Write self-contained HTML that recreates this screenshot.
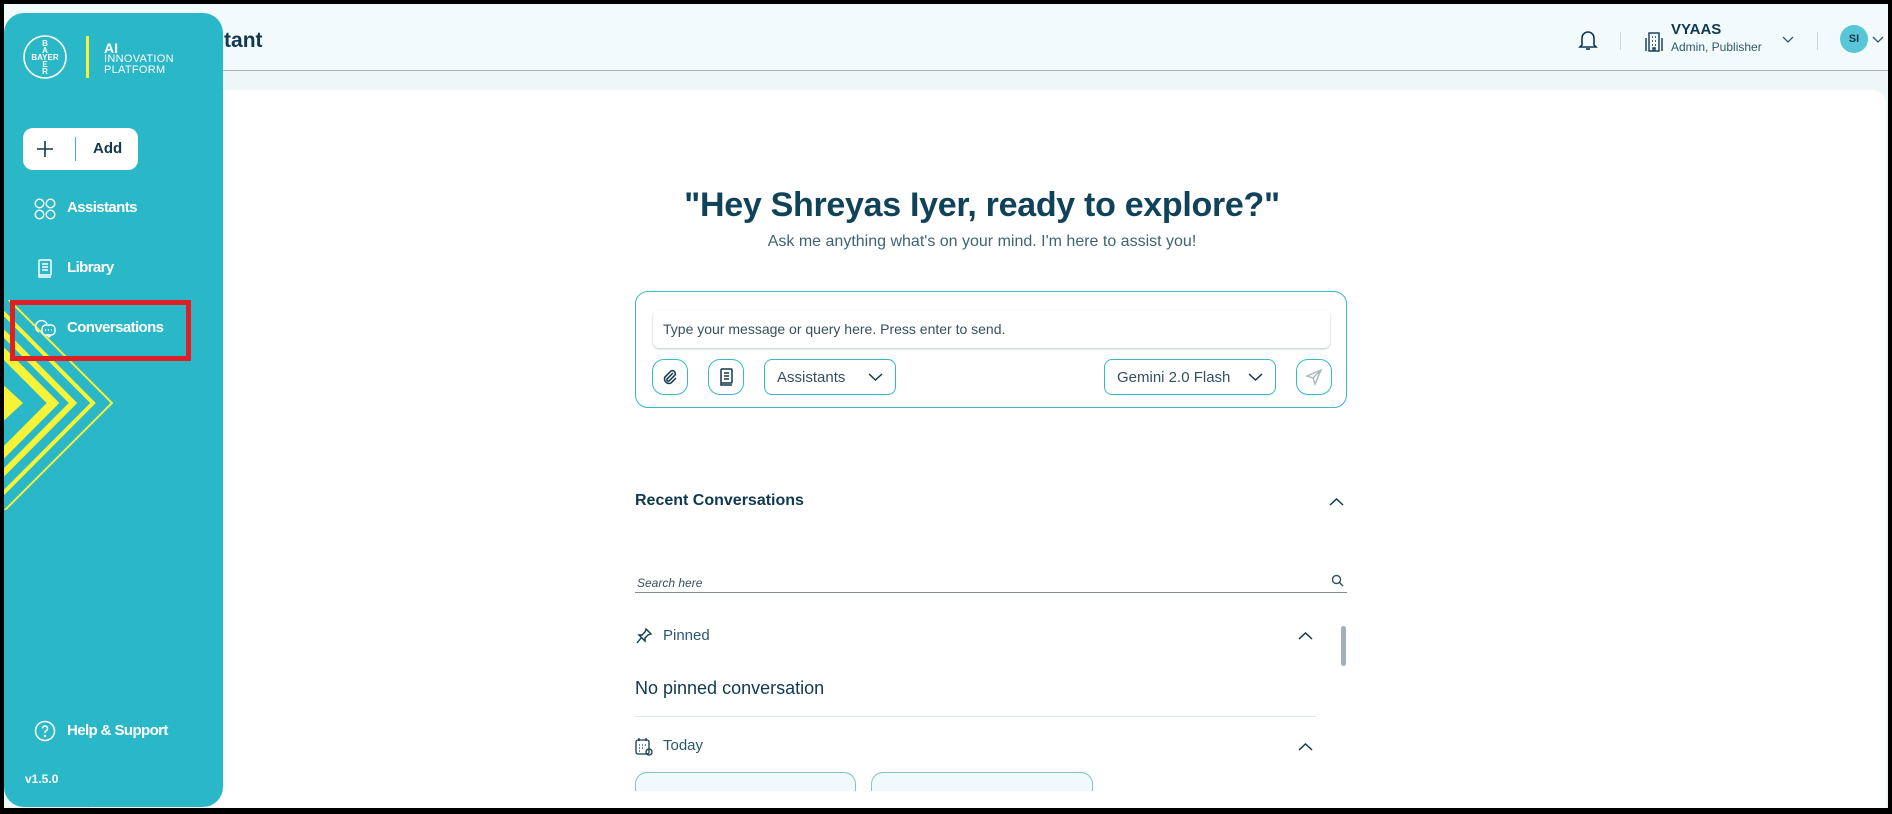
<!DOCTYPE html>
<html><head><meta charset="utf-8"><style>
*{margin:0;padding:0;box-sizing:border-box}
body{width:1892px;height:814px;background:#000;font-family:"Liberation Sans",sans-serif;position:relative;overflow:hidden;color:#10384f}
.frame{position:absolute;left:4px;top:4px;width:1884px;height:804px;background:#eef6f7;overflow:hidden}
.header{position:absolute;left:0;top:0;width:1884px;height:67px;background:#f3fafb;border-bottom:1px solid #a9b3b6}
.card{position:absolute;left:86px;top:86px;width:1796px;height:730px;background:#fff;border-radius:0 14px 0 0}
.side{position:absolute;left:4px;top:13px;width:219px;height:794px;background:#2ab7c8;border-radius:20px;overflow:hidden}
.abs{position:absolute}
.nav{position:absolute;left:0;color:#fff;font-weight:bold;font-size:15px;letter-spacing:-0.6px}
.btn{position:absolute;border:1px solid #39b8c8;border-radius:8px;background:#fff}
.t{position:absolute;white-space:nowrap}
</style></head><body>
<div class="frame">
 <div class="header">
  <div class="t" style="left:164px;top:25px;font-size:21px;font-weight:bold;color:#10384f">Assistant</div>
  <svg class="abs" style="left:1574px;top:24px" width="20" height="24" viewBox="0 0 20 24" fill="none" stroke="#10384f" stroke-width="1.6"><path d="M4 17V10a6 6 0 0 1 12 0v7l2 2H2z"/><path d="M8 21h4"/></svg>
  <div class="abs" style="left:1616px;top:28px;width:1px;height:18px;background:#cfd8da"></div>
  <svg class="abs" style="left:1640px;top:26px" width="22" height="24" viewBox="0 0 22 24" fill="none" stroke="#10384f" stroke-width="1.4"><rect x="5" y="3" width="10" height="18"/><path d="M2 8v13M18 8v13M8 7h1M11 7h1M8 11h1M11 11h1M8 15h1M11 15h1M9 21v-3h2v3"/></svg>
  <div class="t" style="left:1667px;top:17px;font-size:15px;font-weight:bold">VYAAS</div>
  <div class="t" style="left:1667px;top:36px;font-size:12px;color:#2b5a6e">Admin, Publisher</div>
  <svg class="abs" style="left:1778px;top:32px" width="12" height="8"><path d="M1 1l5 5 5-5" stroke="#2b5a6e" fill="none" stroke-width="1.3"/></svg>
  <div class="abs" style="left:1813px;top:28px;width:1px;height:18px;background:#cfd8da"></div>
  <div class="abs" style="left:1836px;top:21px;width:28px;height:28px;border-radius:50%;background:#58c6d6;font-size:11px;font-weight:bold;text-align:center;line-height:28px">SI</div>
  <svg class="abs" style="left:1868px;top:32px" width="12" height="8"><path d="M1 1l5 5 5-5" stroke="#2b5a6e" fill="none" stroke-width="1.3"/></svg>
 </div>
 <div class="card"></div>
</div>
<div class="t" style="left:0;width:1964px;text-align:center;top:186px;font-size:34px;font-weight:bold;color:#10435a;letter-spacing:-0.3px">"Hey Shreyas Iyer, ready to explore?"</div>
<div class="t" style="left:0;width:1964px;text-align:center;top:233px;font-size:16px;color:#3d6474">Ask me anything what's on your mind. I'm here to assist you!</div>
<div class="abs" style="left:635px;top:291px;width:712px;height:117px;border:1px solid #39b8c8;border-radius:13px;background:#fff"></div>
<div class="abs" style="left:653px;top:310px;width:677px;height:38px;border-radius:6px;background:#fff;box-shadow:0 1px 2px #b9c9ce"></div>
<div class="t" style="left:663px;top:321px;font-size:14px;color:#34515e">Type your message or query here. Press enter to send.</div>
<div class="btn" style="left:652px;top:359px;width:36px;height:36px;border-radius:12px"><svg style="margin:8px" width="18" height="18" viewBox="0 0 18 18" fill="none" stroke="#10384f" stroke-width="1.5"><path d="M12 5l-6 6a1.5 1.5 0 0 0 2 2l6-6a3 3 0 0 0-4-4l-6 6a4.5 4.5 0 0 0 6 6l5-5"/></svg></div>
<div class="btn" style="left:708px;top:359px;width:36px;height:36px;border-radius:12px"><svg style="margin:8px 10px" width="16" height="19" viewBox="0 0 16 19" fill="none" stroke="#10384f" stroke-width="1.5"><rect x="2" y="1" width="11" height="14" rx="1"/><path d="M5 5h5M5 8h5M5 11h5M2 15v2h11"/></svg></div>
<div class="btn" style="left:764px;top:359px;width:132px;height:36px"><span class="t" style="left:12px;top:9px;font-size:15px;color:#34515e">Assistants</span><svg class="abs" style="left:103px;top:13px" width="15" height="9"><path d="M1 1l6.5 6 6.5-6" stroke="#10384f" fill="none" stroke-width="1.5"/></svg></div>
<div class="btn" style="left:1104px;top:359px;width:172px;height:36px"><span class="t" style="left:12px;top:9px;font-size:15px;color:#34515e">Gemini 2.0 Flash</span><svg class="abs" style="left:143px;top:13px" width="15" height="9"><path d="M1 1l6.5 6 6.5-6" stroke="#10384f" fill="none" stroke-width="1.5"/></svg></div>
<div class="btn" style="left:1296px;top:359px;width:36px;height:36px;border-radius:12px"><svg style="margin:8px" width="18" height="18" viewBox="0 0 18 18" fill="none" stroke="#a9b6ba" stroke-width="1.4"><path d="M16 2L2 8l6 2 2 6z M16 2L8 10"/></svg></div>
<div class="t" style="left:635px;top:492px;font-size:16px;font-weight:bold;color:#10384f">Recent Conversations</div>
<svg class="abs" style="left:1329px;top:497px" width="15" height="9"><path d="M1 8l6.5-6 6.5 6" stroke="#10384f" fill="none" stroke-width="1.5"/></svg>
<div class="t" style="left:637px;top:576px;font-size:12px;font-style:italic;color:#34515e">Search here</div>
<svg class="abs" style="left:1331px;top:574px" width="13" height="13" viewBox="0 0 13 13" fill="none" stroke="#34515e" stroke-width="1.4"><circle cx="5.5" cy="5.5" r="4"/><path d="M8.5 8.5l3.5 3.5"/></svg>
<div class="abs" style="left:635px;top:592px;width:712px;height:1px;background:#7d8f95"></div>
<svg class="abs" style="left:636px;top:627px" width="17" height="17" viewBox="0 0 17 17" fill="none" stroke="#10384f" stroke-width="1.4"><path d="M10 2l5 5-3 1-3 3 0 3-6-6 3 0 3-3z M5 11l-4 5"/></svg>
<div class="t" style="left:663px;top:627px;font-size:15px;color:#2b5a6e">Pinned</div>
<svg class="abs" style="left:1298px;top:631px" width="15" height="9"><path d="M1 8l6.5-6 6.5 6" stroke="#10384f" fill="none" stroke-width="1.5"/></svg>
<div class="abs" style="left:1341px;top:626px;width:5px;height:40px;border-radius:3px;background:#9fb3b6"></div>
<div class="t" style="left:635px;top:678px;font-size:18px;color:#10384f">No pinned conversation</div>
<div class="abs" style="left:635px;top:716px;width:681px;height:1px;background:#dde6e8"></div>
<svg class="abs" style="left:635px;top:737px" width="18" height="19" viewBox="0 0 18 19" fill="none" stroke="#10384f" stroke-width="1.3"><rect x="1" y="3" width="13" height="14" rx="2"/><path d="M4 1v3M11 1v3M4 8h1M7 8h1M10 8h1M4 11h1M7 11h1M4 14h1"/><circle cx="14" cy="15" r="3"/></svg>
<div class="t" style="left:663px;top:737px;font-size:15px;color:#2b5a6e">Today</div>
<svg class="abs" style="left:1298px;top:742px" width="15" height="9"><path d="M1 8l6.5-6 6.5 6" stroke="#10384f" fill="none" stroke-width="1.5"/></svg>
<div class="abs" style="left:635px;top:772px;width:221px;height:19px;border:1px solid #7cc4cd;border-bottom:none;border-radius:12px 12px 0 0;background:#f1f9fa"></div>
<div class="abs" style="left:871px;top:772px;width:222px;height:19px;border:1px solid #7cc4cd;border-bottom:none;border-radius:12px 12px 0 0;background:#f1f9fa"></div>
<div class="abs" style="left:0;top:808px;width:1892px;height:6px;background:#000"></div>

<div class="side">
 <svg class="abs" style="left:0;top:0" width="219" height="794">
  <defs><clipPath id="c"><rect x="0" y="287" width="219" height="210"/></clipPath></defs>
  <g fill="none" stroke="#f6f339" clip-path="url(#c)">
   <polygon points="-200,188 19,390 -200,592" fill="#f6f339" stroke="none"/>
   <polyline points="-170,170 49,390 -170,610" stroke-width="9"/>
   <polyline points="-150,170 69,390 -150,610" stroke-width="6"/>
   <polyline points="-130,170 89,390 -130,610" stroke-width="4"/>
   <polyline points="-112,170 108,390 -112,610" stroke-width="2"/>
  </g>
 </svg>
 <svg class="abs" style="left:18px;top:21px" width="46" height="46" viewBox="0 0 46 46"><circle cx="23" cy="23" r="21" fill="none" stroke="#fff" stroke-width="1.6"/><g fill="#fff" font-family="Liberation Sans" font-weight="bold" font-size="8" text-anchor="middle"><text x="23" y="12">B</text><text x="23" y="19">A</text><text x="23" y="26">BAYER</text><text x="23" y="33">E</text><text x="23" y="40">R</text></g></svg>
 <div class="abs" style="left:82px;top:23px;width:3px;height:42px;background:#f6f339"></div>
 <div class="t" style="left:100px;top:27px;color:#fff;font-weight:bold;font-size:14px">AI</div>
 <div class="t" style="left:100px;top:41px;color:#fff;font-size:11px;line-height:11px;letter-spacing:0.3px">INNOVATION<br>PLATFORM</div>
 <div class="abs" style="left:19px;top:115px;width:115px;height:42px;background:#fff;border-radius:10px">
  <svg class="abs" style="left:14px;top:13px" width="16" height="16"><path d="M8 0v16M0 8h16" stroke="#10384f" stroke-width="1.6"/></svg>
  <div class="abs" style="left:52px;top:9px;width:1px;height:24px;background:#39b8c8"></div>
  <div class="t" style="left:70px;top:12px;font-weight:bold;font-size:15px;color:#10384f">Add</div>
 </div>
 <svg class="abs" style="left:30px;top:185px" width="22" height="22" viewBox="0 0 22 22" fill="none" stroke="#fff" stroke-width="1.4"><circle cx="5.5" cy="5.5" r="4.3"/><circle cx="16.5" cy="5.5" r="4.3"/><circle cx="5.5" cy="16.5" r="4.3"/><circle cx="16.5" cy="16.5" r="4.3"/></svg>
 <div class="nav" style="left:63px;top:186px">Assistants</div>
 <svg class="abs" style="left:33px;top:246px" width="16" height="20" viewBox="0 0 16 20" fill="none" stroke="#fff" stroke-width="1.5"><rect x="2" y="1" width="12" height="15" rx="1"/><path d="M5 5h6M5 8h6M5 11h6M2 16v2h12"/></svg>
 <div class="nav" style="left:63px;top:246px">Library</div>
 <svg class="abs" style="left:31px;top:306px" width="22" height="20" viewBox="0 0 22 20" fill="none" stroke="#fff" stroke-width="1.4"><path d="M4 13a6 6 0 1 1 8-8"/><rect x="7" y="6" width="13" height="10" rx="4"/><path d="M12 16l2 2 2-2M10 11h1M13 11h1M16 11h1"/></svg>
 <div class="nav" style="left:63px;top:306px">Conversations</div>
 <svg class="abs" style="left:30px;top:707px" width="22" height="22" viewBox="0 0 22 22" fill="none" stroke="#fff" stroke-width="1.5"><circle cx="11" cy="11" r="9.5"/><path d="M8.5 8.5a2.5 2.5 0 1 1 3.5 2.3c-.7.3-1 .8-1 1.5v.7"/><circle cx="11" cy="16" r=".5" fill="#fff"/></svg>
 <div class="nav" style="left:63px;top:709px">Help &amp; Support</div>
 <div class="t" style="left:21px;top:759px;color:#fff;font-weight:bold;font-size:12px">v1.5.0</div>
</div>
<div class="abs" style="left:10px;top:300px;width:181px;height:61px;border:5px solid #e01e25"></div>
</body></html>
